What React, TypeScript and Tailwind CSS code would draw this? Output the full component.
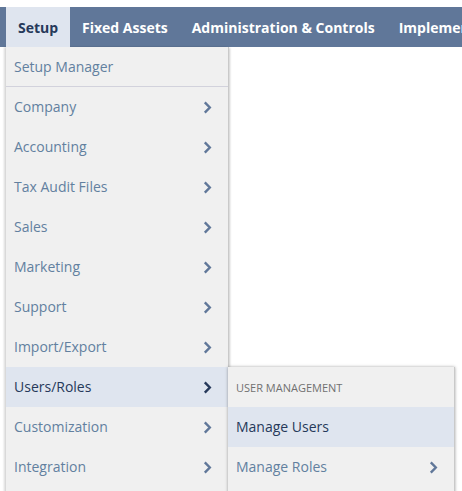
const navItems = ["Fixed Assets", "Administration & Controls", "Implementation"]

const menuItems = [
  "Company",
  "Accounting",
  "Tax Audit Files",
  "Sales",
  "Marketing",
  "Support",
  "Import/Export",
  "Users/Roles",
  "Customization",
  "Integration",
]

function Arrow({ active = false }: { active?: boolean }) {
  return (
    <svg
      viewBox="0 0 9 13"
      className={`h-[13px] w-[9px] ${active ? "text-[#26395a]" : "text-[#607799]"}`}
      fill="none"
      stroke="currentColor"
      strokeWidth={2.4}
    >
      <path d="M1.8 1.4 L6.8 6.5 L1.8 11.6" />
    </svg>
  )
}

function MenuRow({
  label,
  active = false,
  arrow = true,
  divider = false,
}: {
  label: string
  active?: boolean
  arrow?: boolean
  divider?: boolean
}) {
  return (
    <div
      className={`flex h-10 items-center justify-between pl-2 pr-4 text-[14px] ${
        active ? "bg-[#dfe5ef] text-[#26395a]" : "text-[#62809f]"
      } ${divider ? "border-b border-[#d2d2dc] pt-px" : ""}`}
    >
      <span className="pb-0.5">{label}</span>
      {arrow && <Arrow active={active} />}
    </div>
  )
}

export default function App() {
  return (
    <div className="relative h-[491px] w-[462px] overflow-hidden bg-white pt-[7px] font-['Open_Sans',sans-serif]">
      <div className="flex h-10 items-center whitespace-nowrap bg-[#607799] pl-[6px] text-[14px] font-bold text-white">
        <div className="flex h-10 w-16 shrink-0 items-center justify-center bg-[#dfe5ef] text-[#26395a]">Setup</div>
        {navItems.map((item) => (
          <div key={item} className="px-3">
            {item}
          </div>
        ))}
      </div>

      <div className="ml-[6px] w-[223px] border-r border-[#c9c9c9] bg-[#f0f0f0] shadow-[-2px_0_2px_rgba(0,0,0,0.15),1px_1px_2px_rgba(0,0,0,0.2)]">
        <MenuRow label="Setup Manager" arrow={false} divider />
        {menuItems.map((item) => (
          <MenuRow key={item} label={item} active={item === "Users/Roles"} />
        ))}
        <div className="h-6" />
      </div>

      <div className="absolute left-[228px] top-[367px] w-[227px] border-r border-[#c9c9c9] bg-[#f0f0f0] shadow-[0_0_3px_rgba(0,0,0,0.35)]">
        <div className="flex h-10 items-center pl-2 pt-0.5 text-[11px] text-[#707070]">USER MANAGEMENT</div>
        <MenuRow label="Manage Users" active arrow={false} />
        <MenuRow label="Manage Roles" />
        <div className="h-6" />
      </div>
    </div>
  )
}
